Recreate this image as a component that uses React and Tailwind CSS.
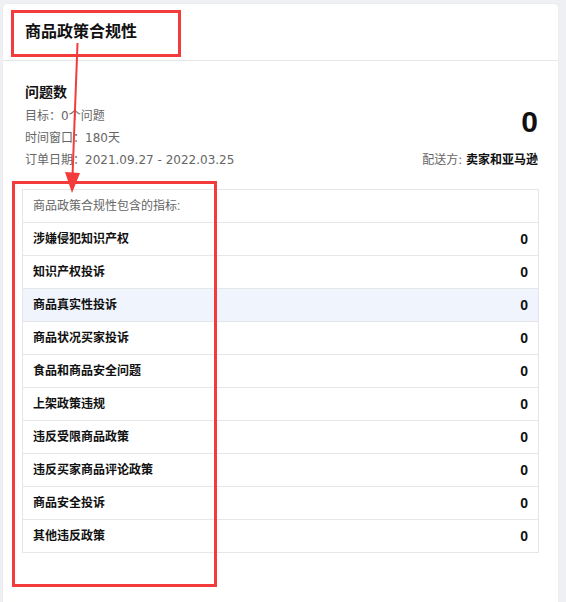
const metrics = [
  "涉嫌侵犯知识产权",
  "知识产权投诉",
  "商品真实性投诉",
  "商品状况买家投诉",
  "食品和商品安全问题",
  "上架政策违规",
  "违反受限商品政策",
  "违反买家商品评论政策",
  "商品安全投诉",
  "其他违反政策",
];

const font = {
  fontFamily: '"Liberation Sans", "Noto Sans CJK SC", sans-serif',
};

// the small grey lines use wider latin digits
const meta = {
  fontFamily: '"DejaVu Sans", "Noto Sans CJK SC", sans-serif',
};

export default function App() {
  return (
    <div
      className="relative w-[566px] h-[602px] overflow-hidden bg-[#eff0f4] pt-[4px] pl-[3px] pr-[8px]"
      style={font}
    >
      <div className="bg-white rounded-[4px] h-[620px] shadow-[0_0_1px_rgba(0,0,0,0.12)]">
        {/* Header */}
        <div className="h-[57px] flex items-center px-[22px] border-b border-[#e6e6e9]">
          <h1 className="text-[16px] font-bold text-[#111]">商品政策合规性</h1>
        </div>

        {/* Body */}
        <div className="px-[19px] pt-[22px]">
          <div className="flex justify-between items-end pl-[3px] pr-[1px]">
            <div>
              <div className="text-[14px] font-bold text-[#111] leading-[18px]">
                问题数
              </div>
              <div
                className="mt-[4px] text-[12px] text-[#666] leading-[22px]"
                style={meta}
              >
                <div>目标：0个问题</div>
                <div>时间窗口：180天</div>
                <div>订单日期：2021.09.27 - 2022.03.25</div>
              </div>
            </div>
            <div className="flex flex-col items-end">
              <div className="text-[30px] font-bold text-[#111] leading-[34px]">
                0
              </div>
              <div className="mt-[10px] text-[12px] leading-[22px]" style={meta}>
                <span className="text-[#666]">配送方: </span>
                <span className="font-bold text-[#111]">卖家和亚马逊</span>
              </div>
            </div>
          </div>

          {/* Table */}
          <div className="mt-[18px] border border-[#e5e6ea]">
            <div className="h-[32px] flex items-center px-[10px] text-[12px] text-[#666]">
              商品政策合规性包含的指标:
            </div>
            {metrics.map((m, i) => (
              <div
                key={m}
                className={
                  "h-[33px] flex items-center justify-between px-[10px] border-t border-[#e5e6ea] " +
                  (i === 2 ? "bg-[#eff4fd]" : "bg-white")
                }
              >
                <span className="text-[12px] font-bold text-[#111]">{m}</span>
                <span className="text-[14px] font-bold text-[#111]">0</span>
              </div>
            ))}
          </div>
        </div>
      </div>

      {/* Annotations */}
      <div className="absolute left-[11px] top-[10px] w-[170px] h-[47px] border-[3px] border-[#f43b3b]" />
      <div className="absolute left-[12px] top-[181px] w-[205px] h-[406px] border-[3px] border-[#f43b3b]" />
      <svg
        className="absolute left-0 top-0"
        width="566"
        height="602"
        viewBox="0 0 566 602"
      >
        <line x1="77.5" y1="43" x2="72.5" y2="176" stroke="#f43b3b" strokeWidth="2" />
        <polygon points="65,172 80,173 72,193" fill="#f43b3b" />
      </svg>
    </div>
  );
}
